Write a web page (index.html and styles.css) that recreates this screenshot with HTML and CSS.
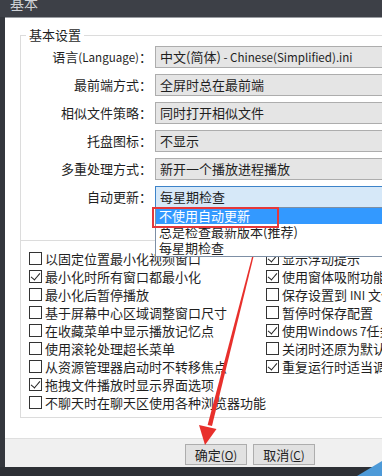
FILE: index.html
```html
<html>
  <head>
    <meta charset="utf-8" />
    <title>基本</title>
    <link rel="stylesheet" href="styles.css">
  </head>
  <body>
    <div class="window">
      <div class="titlebar"><span>基本</span></div>
      <div class="dialog">
        <div class="content">
          <fieldset class="group">
            <legend>基本设置</legend>
            <div class="rows">
              <label>语言<span class="en">(Language)</span>：</label>
              <div class="combo">中文(简体)<span class="en"> - Chinese(Simplified).ini</span></div>
              <label>最前端方式：</label>
              <div class="combo">全屏时总在最前端</div>
              <label>相似文件策略：</label>
              <div class="combo">同时打开相似文件</div>
              <label>托盘图标：</label>
              <div class="combo">不显示</div>
              <label>多重处理方式：</label>
              <div class="combo">新开一个播放进程播放</div>
              <label>自动更新：</label>
              <div class="combo open">每星期检查
                <ul class="droplist">
                  <li class="sel">不使用自动更新</li>
                  <li>总是检查最新版本(推荐)</li>
                  <li>每星期检查</li>
                  <span class="mark"></span>
                </ul>
              </div>
            </div>
          </fieldset>
          <div class="checks">
            <div class="col left">
              <div class="check"><i></i><span>以固定位置最小化视频窗口</span></div>
              <div class="check on"><i></i><span>最小化时所有窗口都最小化</span></div>
              <div class="check"><i></i><span>最小化后暂停播放</span></div>
              <div class="check"><i></i><span>基于屏幕中心区域调整窗口尺寸</span></div>
              <div class="check"><i></i><span>在收藏菜单中显示播放记忆点</span></div>
              <div class="check"><i></i><span>使用滚轮处理超长菜单</span></div>
              <div class="check"><i></i><span>从资源管理器启动时不转移焦点</span></div>
              <div class="check on"><i></i><span>拖拽文件播放时显示界面选项</span></div>
              <div class="check"><i></i><span>不聊天时在聊天区使用各种浏览器功能</span></div>
            </div>
            <div class="col">
              <div class="check on"><i></i><span>显示浮动提示</span></div>
              <div class="check on"><i></i><span>使用窗体吸附功能</span></div>
              <div class="check"><i></i><span>保存设置到 <span class="en">INI</span> 文件</span></div>
              <div class="check"><i></i><span>暂停时保存配置</span></div>
              <div class="check on"><i></i><span>使用<span class="en">Windows 7</span>任务栏功能</span></div>
              <div class="check"><i></i><span>关闭时还原为默认大小</span></div>
              <div class="check on"><i></i><span>重复运行时适当调整位置</span></div>
            </div>
          </div>
        </div>
        <div class="footer">
          <button>确定<span class="en">(<u>O</u>)</span></button>
          <button>取消<span class="en">(<u>C</u>)</span></button>
        </div>
      </div>
      <div class="bottom-edge"></div>
      <svg class="overlay" width="382" height="476" viewBox="0 0 382 476">
        <polygon points="357,476 382,461 382,476" fill="#4d9ad8" />
        <polygon points="257.6,236 258.6,236 212,426 207.6,425" fill="#e8302c" />
        <polygon points="199,425 216.5,429 205,445" fill="#e8302c" />
      </svg>
    </div>
  </body>
</html>
```
FILE: styles.css
```css
* {
  box-sizing: border-box;
}
html,
body {
  margin: 0;
  padding: 0;
}
body {
  width: 382px;
  height: 476px;
  overflow: hidden;
  background: #34373d;
  font-family: "Noto Sans CJK SC", "Noto Sans", sans-serif;
  font-size: 13px;
  color: #1f1f1f;
}
.en {
  font-size: 11.6px;
}
.window {
  position: relative;
  width: 440px;
}
.titlebar {
  height: 17px;
  overflow: hidden;
  background: #3d4047;
  color: #d0d3d8;
  padding-left: 10px;
}
.titlebar span {
  display: block;
  margin-top: -4px;
  line-height: 14px;
  font-size: 14px;
}
.dialog {
  margin-left: 5px;
  background: #fff;
  border-top: 1px solid #9a9da2;
}
.content {
  padding: 9px 15px 20px 15px;
}
.group {
  margin: 0;
  padding: 0 0 32px 0;
  min-width: 0;
  border: 1px solid #dcdcdc;
}
.group legend {
  margin-left: 5px;
  padding: 0 3px;
  line-height: 16px;
}
.rows {
  display: grid;
  grid-template-columns: 131px 1fr;
  column-gap: 3px;
  row-gap: 6px;
  padding-top: 3px;
}
.rows label {
  text-align: right;
  line-height: 22px;
  white-space: nowrap;
}
.combo {
  height: 22px;
  border: 1px solid #adadad;
  background: #e5e5e5;
  line-height: 20px;
  padding-left: 4px;
  white-space: nowrap;
}
.combo.open {
  position: relative;
  background: #d6e8f8;
  border-color: #3d83c9;
}
.droplist {
  position: absolute;
  top: 20px;
  left: -1px;
  right: -1px;
  margin: 0;
  padding: 0;
  list-style: none;
  background: #fff;
  border: 1px solid #7d8fa5;
  z-index: 2;
}
.droplist li {
  height: 16px;
  line-height: 16px;
  padding-left: 3px;
}
.droplist .sel {
  background: #3399ff;
  color: #fff;
}
.mark {
  position: absolute;
  left: -4px;
  top: -1px;
  width: 127px;
  height: 21px;
  border: 2px solid #e5383b;
}
.checks {
  display: flex;
  border: 1px solid #dcdcdc;
  border-top: none;
  padding: 8px 0 6px 8px;
}
.col.left {
  width: 238px;
}
.check {
  height: 18px;
  display: flex;
  align-items: center;
  white-space: nowrap;
}
.check i {
  position: relative;
  flex: none;
  width: 13px;
  height: 13px;
  margin-right: 3px;
  border: 1px solid #333;
  background: #fff;
}
.check.on i::after {
  content: "";
  position: absolute;
  left: 3px;
  top: 0px;
  width: 4px;
  height: 8px;
  border: solid #222;
  border-width: 0 1px 1px 0;
  transform: rotate(40deg);
}
.footer {
  display: flex;
  gap: 6px;
  background: #f0f0f0;
  border-top: 1px solid #dfdfdf;
  padding: 5px 0 2px 180px;
}
.footer button {
  width: 62px;
  height: 21px;
  padding: 0;
  border: 1px solid #adadad;
  background: #e1e1e1;
  font: inherit;
  line-height: 19px;
  color: #222;
}
.bottom-edge {
  height: 9px;
  background: #2d3035;
}
.overlay {
  position: absolute;
  left: 0;
  top: 0;
  pointer-events: none;
}
```
